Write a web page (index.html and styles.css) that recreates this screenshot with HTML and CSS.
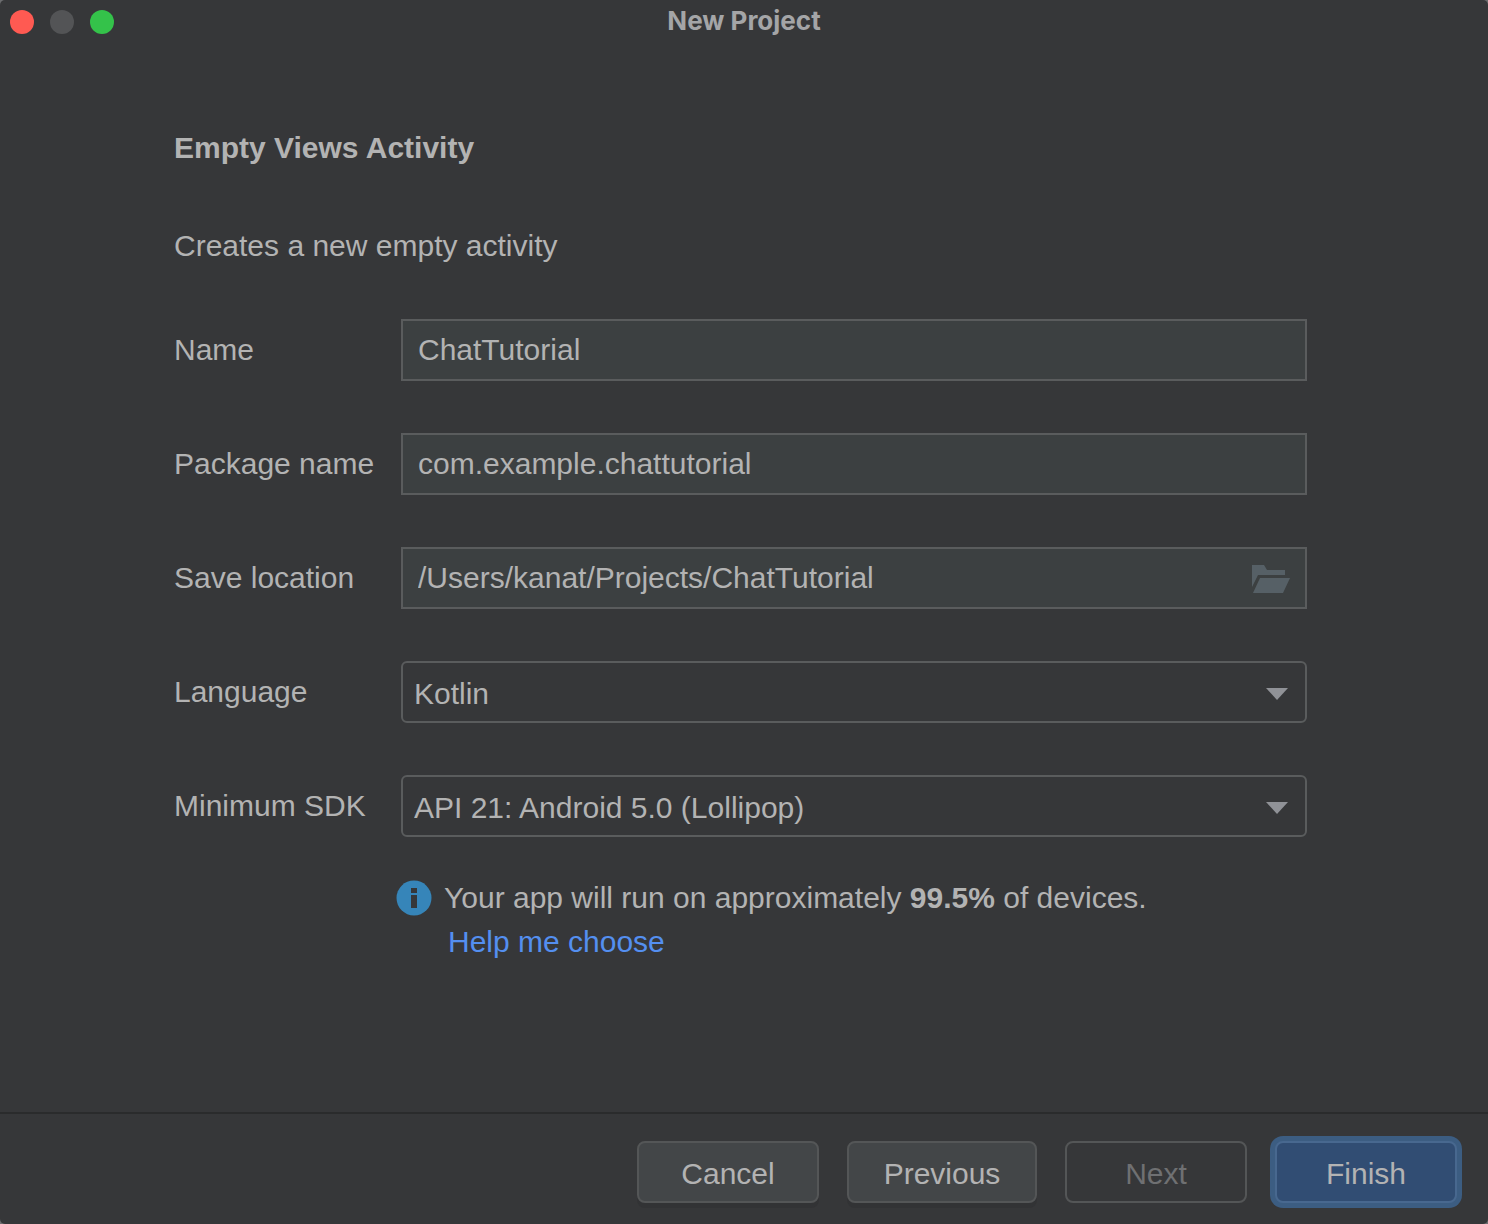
FILE: index.html
```html
<!DOCTYPE html>
<html lang="en">

<head>
    <meta charset="UTF-8">
    <meta name="viewport" content="width=device-width, initial-scale=1">
    <title>New Project</title>
    <link rel="stylesheet" href="styles.css">
</head>

<body>
    <form class="window">
        <header class="titlebar">
            <div class="lights">
                <button type="button" class="light close" aria-label="Close"></button>
                <button type="button" class="light minimize" aria-label="Minimize" disabled></button>
                <button type="button" class="light zoom" aria-label="Zoom"></button>
            </div>
            <h1 class="title">New Project</h1>
        </header>

        <main class="content">
            <h2 class="heading">Empty Views Activity</h2>
            <p class="description">Creates a new empty activity</p>

            <div class="fields">
                <label for="name">Name</label>
                <input class="field" type="text" id="name" value="ChatTutorial">

                <label for="package">Package name</label>
                <input class="field" type="text" id="package" value="com.example.chattutorial">

                <label for="location">Save location</label>
                <div class="control">
                    <input class="field" type="text" id="location" value="/Users/kanat/Projects/ChatTutorial">
                    <button type="button" class="browse" aria-label="Browse">
                        <svg width="38" height="28" viewBox="0 0 38 28">
                            <path d="M0 0H12L15 5H33V10H6L0 22Z" />
                            <path d="M8 13H38L31 28H1Z" />
                        </svg>
                    </button>
                </div>

                <label for="language">Language</label>
                <div class="control">
                    <select class="field" id="language">
                        <option>Kotlin</option>
                        <option>Java</option>
                    </select>
                    <svg class="arrow" width="22" height="12" viewBox="0 0 22 12">
                        <path d="M0 0H22L11 12Z" />
                    </svg>
                </div>

                <label for="sdk">Minimum SDK</label>
                <div class="control">
                    <select class="field" id="sdk">
                        <option>API 21: Android 5.0 (Lollipop)</option>
                    </select>
                    <svg class="arrow" width="22" height="12" viewBox="0 0 22 12">
                        <path d="M0 0H22L11 12Z" />
                    </svg>
                </div>
            </div>

            <div class="info">
                <svg class="info-icon" width="36" height="36" viewBox="0 0 36 36">
                    <circle cx="18" cy="18" r="17.5" fill="#3685b9" />
                    <path d="M15 8H21V13H15ZM15 15H21V28H15Z" fill="#363739" />
                </svg>
                <p>Your app will run on approximately <b>99.5%</b> of devices.</p>
                <a class="help" href="#">Help me choose</a>
            </div>
        </main>

        <footer class="actions">
            <button type="button" class="btn">Cancel</button>
            <button type="button" class="btn previous">Previous</button>
            <button type="button" class="btn" disabled>Next</button>
            <button type="submit" class="btn primary">Finish</button>
        </footer>
    </form>
</body>

</html>
```

FILE: styles.css
```css
* {
    box-sizing: border-box;
}

html {
    background-color: #6c6d6f;
}

body {
    margin: 0;
    color: #b3b3b3;
    font-family: "Liberation Sans", Arial, sans-serif;
    font-size: 30px;
    line-height: 36px;
}

h1,
h2,
p {
    margin: 0;
}

button,
input,
select {
    font: inherit;
    color: inherit;
}

.window {
    display: flex;
    flex-direction: column;
    min-height: 100vh;
    background-color: #363739;
    border-radius: 5px;
}

/* title bar */
.titlebar {
    display: grid;
    grid-template-columns: 1fr auto 1fr;
    align-items: center;
    height: 44px;
    padding: 0 10px;
}

.lights {
    display: flex;
    gap: 16px;
}

.light {
    width: 24px;
    height: 24px;
    padding: 0;
    border: none;
    border-radius: 50%;
}

.close {
    background-color: #ff5a52;
}

.minimize {
    background-color: #535456;
}

.zoom {
    background-color: #34c24a;
}

.title {
    color: #a4a5a7;
    font-family: Inter, sans-serif;
    font-size: 26px;
    font-weight: 700;
    line-height: 42px;
    padding-bottom: 2px;
}

/* form */
.content {
    flex: 1;
    padding: 86px 181px 0 174px;
}

.heading {
    font-size: 30px;
    font-weight: bold;
}

.description {
    margin-top: 62px;
}

.fields {
    display: grid;
    grid-template-columns: 227px 1fr;
    row-gap: 52px;
    align-items: center;
    margin-top: 55px;
}

.control {
    position: relative;
}

.field {
    display: block;
    width: 100%;
    height: 62px;
    padding: 0 15px;
    border: 2px solid #5a5c5d;
    border-radius: 0;
    background-color: #3c4041;
    outline: none;
}

select.field {
    appearance: none;
    padding: 4px 11px 0;
    border-radius: 6px;
    background-color: #363739;
}

.browse {
    position: absolute;
    top: 18px;
    right: 17px;
    padding: 0;
    border: none;
    background: none;
}

.browse svg {
    display: block;
    fill: #566066;
}

.arrow {
    position: absolute;
    top: 27px;
    right: 19px;
    fill: #909297;
    pointer-events: none;
}

.info {
    display: grid;
    grid-template-columns: 36px 1fr;
    column-gap: 12px;
    row-gap: 8px;
    margin: 43px 0 0 222px;
}

.help {
    grid-column: 2;
    justify-self: start;
    padding-left: 4px;
    color: #548ff0;
    text-decoration: none;
}

/* bottom buttons */
.actions {
    display: flex;
    justify-content: flex-end;
    gap: 28px;
    padding: 27px 31px 21px;
    border-top: 2px solid #2a2b2c;
}

.btn {
    min-width: 182px;
    height: 62px;
    padding: 4px 20px 0;
    border: 2px solid #545657;
    border-radius: 8px;
    background-color: #434648;
    box-shadow: 0 5px 0 #323335;
}

.previous {
    min-width: 190px;
}

.btn:disabled {
    color: #6f7072;
    background-color: transparent;
    box-shadow: none;
}

.primary {
    border-color: #48688f;
    background-color: #314d73;
    box-shadow: 0 0 0 5px #3c5d82;
}
```
